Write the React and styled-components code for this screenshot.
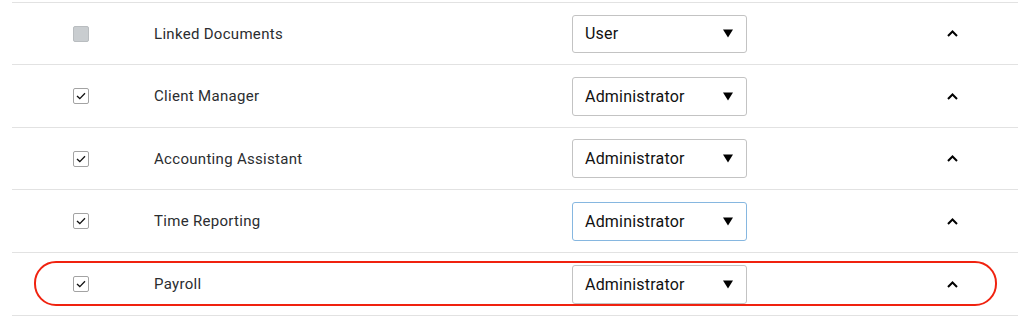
import React from "react";
import styled, { createGlobalStyle } from "styled-components";

const Global = createGlobalStyle`
  html, body { margin: 0; padding: 0; background: #fff; }
  body { font-family: Roboto, "Noto Sans", Arial, sans-serif; }
`;

const Table = styled.div`
  padding: 2px 0 0 12px;
  width: 1006px;
`;

const Row = styled.div`
  position: relative;
  display: grid;
  grid-template-columns: 142px 418px 175px 1fr;
  align-items: center;
  height: ${(p) => p.$h}px;
  border-top: 1px solid #e2e2e2;
  box-sizing: border-box;
  &:last-child { border-bottom: 1px solid #e2e2e2; height: ${(p) => p.$h + 1}px; }
`;

const CheckCell = styled.div`
  padding-left: 61px;
  display: flex;
  align-items: center;
`;

const Box = styled.span`
  width: 16px;
  height: 16px;
  box-sizing: border-box;
  border-radius: 2px;
  border: 1px solid ${(p) => (p.$checked ? "#a3a3a3" : "#b9bdc0")};
  background: ${(p) => (p.$checked ? "#fff" : "#c9cdd0")};
  display: flex;
  align-items: center;
  justify-content: center;
`;

const Name = styled.div`
  font-size: 15px;
  color: #2b2d30;
  letter-spacing: 0.3px;
`;

const Select = styled.div`
  height: ${(p) => p.$sh}px;
  box-sizing: border-box;
  border: 1px solid ${(p) => (p.$focus ? "#86b7e0" : "#c3c3c3")};
  border-radius: 3px;
  display: flex;
  align-items: center;
  justify-content: space-between;
  padding: 0 13px 0 12px;
  font-size: 16px;
  color: #111;
  letter-spacing: 0.2px;
`;

const ChevronCell = styled.div`
  padding-left: 200px;
  display: flex;
  align-items: center;
`;

const Highlight = styled.div`
  position: absolute;
  left: 22px;
  top: 8px;
  width: 963px;
  height: 45px;
  box-sizing: border-box;
  border: 2px solid #f0220f;
  border-radius: 22px;
  pointer-events: none;
`;

const Check = () => (
  <svg width="10" height="8" viewBox="0 0 10 8">
    <polyline points="1,4 3.8,6.6 9,1.2" fill="none" stroke="#111" strokeWidth="1.3" />
  </svg>
);

const Caret = () => (
  <svg width="10" height="9" viewBox="0 0 10 9">
    <polygon points="0,0.5 10,0.5 5,8.5" fill="#000" />
  </svg>
);

const Chevron = () => (
  <svg width="11" height="7" viewBox="0 0 11 7">
    <polyline points="1,6 5.5,1.5 10,6" fill="none" stroke="#000" strokeWidth="2" />
  </svg>
);

const rows = [
  { name: "Linked Documents", checked: false, role: "User", h: 62, sh: 38 },
  { name: "Client Manager", checked: true, role: "Administrator", h: 63, sh: 39 },
  { name: "Accounting Assistant", checked: true, role: "Administrator", h: 62, sh: 39 },
  { name: "Time Reporting", checked: true, role: "Administrator", h: 63, sh: 39, focus: true },
  { name: "Payroll", checked: true, role: "Administrator", h: 63, sh: 39, highlight: true },
];

export default function App() {
  return (
    <>
      <Global />
      <Table>
        {rows.map((r) => (
          <Row key={r.name} $h={r.h}>
            <CheckCell>
              <Box $checked={r.checked}>{r.checked && <Check />}</Box>
            </CheckCell>
            <Name>{r.name}</Name>
            <Select $focus={r.focus} $sh={r.sh}>
              <span>{r.role}</span>
              <Caret />
            </Select>
            <ChevronCell>
              <Chevron />
            </ChevronCell>
            {r.highlight && <Highlight />}
          </Row>
        ))}
      </Table>
    </>
  );
}
